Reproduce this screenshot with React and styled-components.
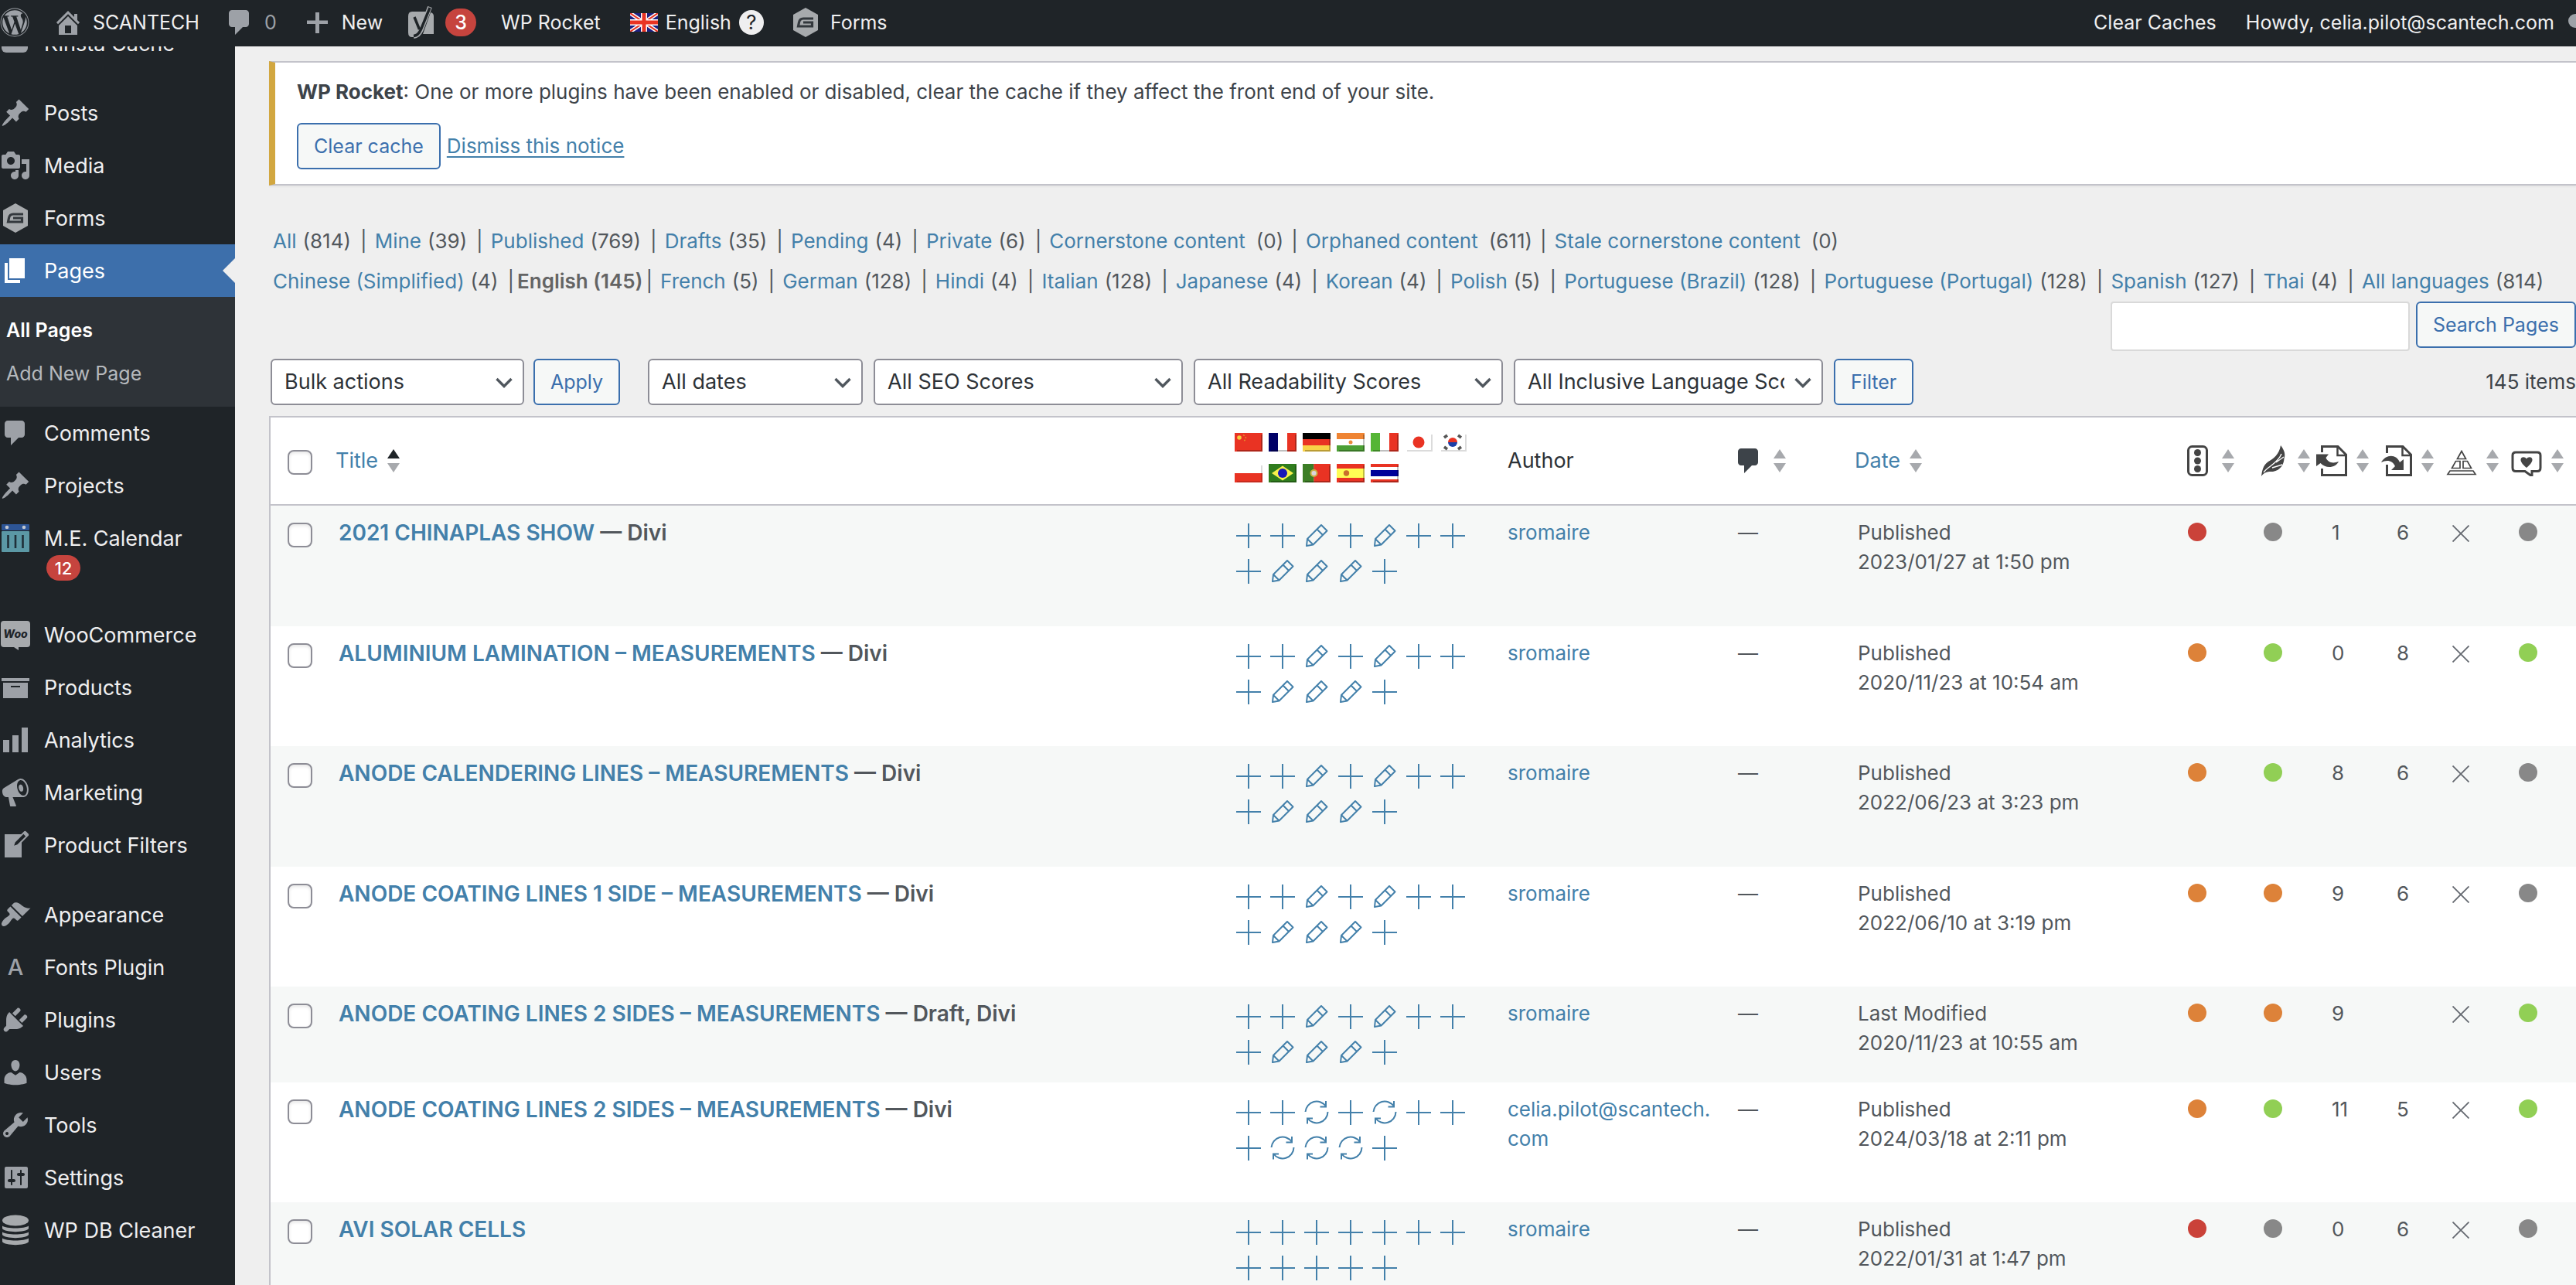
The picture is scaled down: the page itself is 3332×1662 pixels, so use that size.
import React from "react";
import styled, { createGlobalStyle, css } from "styled-components";
import { FaWordpress } from "react-icons/fa";

const c = {
  bar: "#1f2428",
  sub: "#2e3338",
  light: "#efeff0",
  icon: "#9da1a7",
  dim: "#b5b9bd",
  active: "#3d6fab",
  red: "#c6443e",
  bg: "#efefef",
  line: "#c3c3ca",
  field: "#8d8d96",
  link: "#4380aa",
  btn: "#3b6fad",
  text: "#3d4349",
  dark: "#2d3237",
  muted: "#52575c",
  stripe: "#f6f8f7",
  yellow: "#d2a740",
};
const dots = { red: "#ca4239", gray: "#888888", orange: "#dd8239", green: "#91cf55" };

const GlobalStyle = createGlobalStyle`
  *, *::before, *::after { box-sizing: border-box; }
  body {
    margin: 0;
    background: ${c.bg};
    color: ${c.text};
    font-family: Inter, "Liberation Sans", sans-serif;
    font-size: 26px;
    line-height: 38px;
  }
  button, input, select { font: inherit; }
  a { color: ${c.link}; text-decoration: none; }
  svg { display: block; flex: none; }
`;

const Page = styled.div`
  height: 100vh;
  overflow: hidden;
  display: flex;
  flex-direction: column;
`;

/* ---------- Admin bar ---------- */
const Bar = styled.header`
  flex: none;
  height: 60px;
  padding-bottom: 3px;
  background: ${c.bar};
  color: ${c.light};
  display: flex;
  justify-content: space-between;
  position: relative;
  z-index: 2;
  white-space: nowrap;
  font-size: 25px;
`;
const BarGroup = styled.nav`
  display: flex;
  align-items: center;
`;
const BarLink = styled.a`
  display: flex;
  align-items: center;
  gap: ${(p) => p.$gap || 12}px;
  padding: 0 ${(p) => p.$right ?? 14}px 0 ${(p) => p.$left ?? 16}px;
  color: ${(p) => (p.$dim ? c.icon : c.light)};
`;
const BarIcon = styled.span`
  color: ${c.icon};
`;
const Badge = styled.span`
  display: inline-flex;
  align-items: center;
  justify-content: center;
  min-width: ${(p) => p.$w}px;
  height: ${(p) => p.$h}px;
  border-radius: 18px;
  background: ${c.red};
  color: #fff;
  font-size: ${(p) => p.$size}px;
  font-weight: 500;
`;
const Help = styled.span`
  display: flex;
  align-items: center;
  justify-content: center;
  width: 32px;
  height: 32px;
  border-radius: 50%;
  background: ${c.light};
  color: ${c.bar};
  font-size: 26px;
`;
const Avatar = styled.span`
  width: 36px;
  height: 18px;
  margin: 0 -26px 12px 0;
  align-self: flex-end;
  border-radius: 18px;
  background: ${c.icon};
`;

/* ---------- Sidebar ---------- */
const Body = styled.div`
  flex: 1;
  min-height: 0;
  display: flex;
`;
const Sidebar = styled.nav`
  flex: none;
  width: 304px;
  background: ${c.bar};
`;
const Menu = styled.ul`
  list-style: none;
  margin: -38px 0 0;
  padding: 0;
`;
const MenuItem = styled.li`
  margin-bottom: ${(p) => (p.$gapAfter ? 22 : 0)}px;
`;
const MenuLink = styled.a`
  display: flex;
  align-items: flex-start;
  gap: 17px;
  padding: 15px 0 14px;
  color: ${c.light};
  font-size: 27px;
  position: relative;
  ${(p) =>
    p.$active &&
    css`
      background: ${c.active};
      color: #fff;
      &::after {
        content: "";
        position: absolute;
        right: 0;
        top: 18px;
        border: 16px solid transparent;
        border-left: 0;
        border-right-color: ${c.bg};
      }
    `}
`;
const MenuIcon = styled.span`
  flex: none;
  width: 40px;
  height: 38px;
  display: flex;
  align-items: center;
  justify-content: center;
  color: ${(p) => (p.$active ? "#fff" : c.icon)};
`;
const MenuText = styled.span`
  display: flex;
  flex-direction: column;
  align-items: flex-start;
  padding-top: 1px;
  ${Badge} {
    margin: 2px 0 0 3px;
  }
`;
const SubMenu = styled.ul`
  list-style: none;
  margin: 0;
  padding: 15px 0;
  background: ${c.sub};
`;
const SubLink = styled.a`
  display: block;
  padding: 9px 8px;
  color: ${(p) => (p.$current ? "#fff" : c.dim)};
  font-size: 25px;
  font-weight: ${(p) => (p.$current ? 600 : 400)};
`;

/* ---------- Main ---------- */
const Main = styled.main`
  flex: 1;
  min-width: 0;
  padding: 19px 0 0 44px;
`;
const Notice = styled.section`
  background: #fff;
  border: 2px solid ${c.line};
  border-left: 8px solid ${c.yellow};
  border-right: 0;
  box-shadow: 0 2px 2px rgba(0, 0, 0, 0.04);
  padding: 19px 28px;
  margin-bottom: 46px;
`;
const NoticeText = styled.p`
  margin: 0 0 21px;
`;
const NoticeActions = styled.div`
  display: flex;
  align-items: center;
  gap: 8px;
`;
const Underlined = styled.a`
  text-decoration: underline;
  text-decoration-thickness: 2px;
  text-underline-offset: 4px;
`;
const Button = styled.button`
  height: 60px;
  padding: 0 20px;
  border: 2px solid ${c.btn};
  border-radius: 6px;
  background: ${c.stripe};
  color: ${c.btn};
  font-size: 25px;
  white-space: nowrap;
`;
const Views = styled.ul`
  list-style: none;
  margin: 0;
  padding: 0 0 0 5px;
  display: flex;
  line-height: 52px;
  white-space: nowrap;
`;
const View = styled.li`
  display: flex;
  gap: ${(p) => (p.$wide ? 14 : 8)}px;
  color: ${c.muted};
  strong { color: #646464; font-weight: 600; }
  &:not(:last-child)::after {
    content: "|";
    margin-left: ${(p) => (p.$tight ? -4 : 4)}px;
    margin-right: ${(p) => (p.$tightAfter ? 4 : 10)}px;
  }
`;
const SearchRow = styled.form`
  display: flex;
  justify-content: flex-end;
  gap: 8px;
  margin-bottom: 10px;
`;
const SearchInput = styled.input`
  width: 387px;
  height: 64px;
  border: 2px solid #d9d9d9;
  border-radius: 4px;
  background: #fff;
  padding: 0 16px;
`;
const Nav = styled.div`
  display: flex;
  align-items: center;
  padding-left: 2px;
  margin-bottom: 14px;
`;
const NavGroup = styled.div`
  display: flex;
  gap: ${(p) => p.$gap || 12}px;
  margin-right: ${(p) => p.$after || 0}px;
`;
const Count = styled.span`
  margin-left: auto;
`;
const SelectBox = styled.div`
  position: relative;
  width: ${(p) => p.$w}px;
  svg {
    position: absolute;
    right: 15px;
    top: 24px;
    pointer-events: none;
  }
`;
const Select = styled.select`
  appearance: none;
  width: 100%;
  height: 60px;
  padding: 0 48px 0 16px;
  border: 2px solid ${c.field};
  border-radius: 6px;
  background: #fff;
  color: ${c.dark};
  font-size: 27px;
`;

/* ---------- Table ---------- */
const Table = styled.table`
  width: 100%;
  table-layout: fixed;
  border-collapse: separate;
  border-spacing: 0;
  border: 2px solid ${c.line};
  border-right: 0;
  background: #fff;
`;
const Col = styled.col`
  width: ${(p) => (p.$w ? `${p.$w}px` : "auto")};
`;
const Th = styled.th`
  height: 114px;
  padding: 0 0 0 ${(p) => p.$left || 0}px;
  border-bottom: 2px solid ${c.line};
  text-align: left;
  vertical-align: middle;
  font-weight: 400;
  font-size: 27px;
  color: ${c.dark};
`;
const Row = styled.tr`
  height: 156px;
  vertical-align: top;
  &:nth-child(even) { height: 155px; }
  &:nth-child(odd) { background: ${c.stripe}; }
  && { ${(p) => p.$short && "height: 124px;"} }
`;
const Td = styled.td`
  padding: 16px 0 0 ${(p) => p.$left || 0}px;
  color: ${c.muted};
`;
const TitleTd = styled(Td)`
  font-size: 28px;
  font-weight: 600;
`;
const AuthorTd = styled(Td)`
  padding-right: 14px;
  overflow-wrap: anywhere;
`;
const Check = styled.input`
  appearance: none;
  display: block;
  width: 32px;
  height: 32px;
  margin: ${(p) => (p.$row ? 6 : 4)}px 0 0;
  border: 2px solid ${c.field};
  border-radius: 8px;
  background: #fff;
  box-shadow: inset 0 2px 4px rgba(0, 0, 0, 0.1);
`;
const SortLink = styled.a`
  display: flex;
  align-items: center;
  gap: 12px;
  color: ${(p) => (p.$plain ? c.text : c.link)};
`;
const FlagGrid = styled.div`
  display: grid;
  grid-template-columns: repeat(7, 36px);
  gap: 16px 8px;
  padding-bottom: 8px;
`;
const TransGrid = styled.div`
  display: grid;
  grid-template-columns: repeat(7, 36px);
  column-gap: 8px;
  a { color: ${c.link}; }
`;
const Dot = styled.span`
  display: block;
  width: 24px;
  height: 24px;
  margin-top: 6px;
  border-radius: 50%;
  background: ${(p) => dots[p.$tone]};
`;
const CrossBox = styled.span`
  display: block;
  padding-top: 9px;
`;

/* ---------- Drawings ---------- */
const dash = {
  home: "M16 8.5l1.53 1.53-1.06 1.06L10 4.6l-6.47 6.49-1.06-1.06L10 2.5l4 4v-2h2v4zm-6-2.46l6 5.99V18H4v-5.97zM12 17v-5H8v5h4z",
  comment: "M5 2h9c1.1 0 2 .9 2 2v7c0 1.1-.9 2-2 2h-2l-5 5v-5H5c-1.1 0-2-.9-2-2V4c0-1.1.9-2 2-2z",
  plus: "M17 8.8v2.2h-5.5v6H9v-6H3.5V8.8H9V3.5h2.5v5.3z",
  pin: "M10.44 3.02l1.82-1.82 6.36 6.35-1.83 1.82c-1.05-.68-2.48-.57-3.41.36l-.75.75c-.92.93-1.04 2.35-.35 3.41l-1.83 1.82-2.41-2.41-2.8 2.79c-.42.42-3.38 2.71-3.8 2.29s1.86-3.39 2.28-3.81l2.79-2.79L4.1 9.36l1.83-1.82c1.05.69 2.48.57 3.4-.36l.75-.75c.93-.92 1.05-2.35.36-3.41z",
  media: "M13 11V4c0-.55-.45-1-1-1h-1.67L9 1H5L3.67 3H2c-.55 0-1 .45-1 1v7c0 .55.45 1 1 1h10c.55 0 1-.45 1-1zM7 4.5c1.38 0 2.5 1.12 2.5 2.5S8.38 9.5 7 9.5 4.5 8.38 4.5 7 5.62 4.5 7 4.5zM14 6h5v10.5c0 1.38-1.12 2.5-2.5 2.5S14 17.88 14 16.5s1.12-2.5 2.5-2.5c.17 0 .34.02.5.05V9h-3V6zm-4 8.05V13h2v3.5c0 1.38-1.12 2.5-2.5 2.5S7 17.88 7 16.5 8.12 14 9.5 14c.17 0 .34.02.5.05z",
  page: "M6 15V2h10v13H6zm-1 1h8v2H3V5h2v11z",
  archive: "M19 4v2H1V4h18zM2 7h16v10H2V7zm11 3V9H7v1h6z",
  chart: "M18 18V2h-4v16h4zm-6 0V7H8v11h4zm-6 0v-8H2v8h4z",
  megaphone: "M18.15 5.94c.46 1.62.38 3.22-.02 4.48-.42 1.28-1.26 2.18-2.3 2.48-.16.06-.26.06-.4.06-.06.02-.12.02-.18.02-.06.02-.14.02-.22.02h-6.8l2.22 5.5c.02.14-.06.26-.14.34-.08.1-.24.16-.34.16H6.95c-.1 0-.26-.06-.34-.16-.08-.08-.16-.2-.14-.34l-1-5.5H4.25l-.02-.02c-.5.06-1.08-.18-1.54-.62s-.88-1.08-1.06-1.88c-.24-.8-.2-1.56-.02-2.2.18-.62.58-1.08 1.06-1.3l.02-.02 9-5.4c.1-.06.18-.1.24-.16.06-.04.14-.08.24-.12.16-.08.28-.12.5-.18 1.04-.3 2.24.1 3.22.98s1.84 2.24 2.26 3.86zm-2.58 5.98h-.02c.4-.1.74-.34 1.04-.7.58-.7.86-1.76.86-3.04 0-.64-.1-1.3-.28-1.98-.34-1.36-1.02-2.5-1.78-3.24s-1.68-1.1-2.46-.88c-.82.22-1.4.96-1.7 2-.32 1.04-.28 2.36.06 3.72.38 1.36 1 2.5 1.8 3.24.78.74 1.62 1.1 2.48.88zm-2.54-7.08c.22-.04.42-.02.62.04.38.16.76.48 1.02 1s.42 1.2.42 1.78c0 .3-.04.56-.12.8-.18.48-.44.84-.86.94-.34.1-.8-.06-1.14-.4s-.64-.86-.78-1.5c-.18-.62-.12-1.24.02-1.72s.48-.84.82-.94z",
  write: "M16.89 1.2l1.41 1.41c.39.39.39 1.02 0 1.41L14 8.33V18H3V3h10.67l1.8-1.8c.4-.39 1.03-.4 1.42 0zm-5.66 8.48l5.37-5.36-1.42-1.42-5.36 5.37-.71 2.12z",
  brush: "M14.48 11.06L7.41 3.99l1.5-1.5c.5-.56 2.3-.47 3.51.32 1.21.8 1.43 1.28 2.91 2.1 1.18.64 2.45 1.26 4.45.85zm-.71.71L6.7 4.7 4.93 6.47c-.39.39-.39 1.02 0 1.41l1.06 1.06c.39.39.39 1.03 0 1.42-.6.6-1.43 1.11-2.21 1.69-.35.26-.7.53-1.01.84C1.43 14.23.4 16.08 1.4 17.07c.99 1 2.84-.03 4.18-1.36.31-.31.58-.66.85-1.02.57-.78 1.08-1.61 1.69-2.21.39-.39 1.02-.39 1.41 0l1.06 1.06c.39.39 1.02.39 1.41 0z",
  plug: "M13.11 4.36L9.87 7.6 8 5.73l3.24-3.24c.35-.34 1.05-.2 1.56.32.52.51.66 1.21.31 1.55zm-8 1.77l.91-1.12 9.01 9.01-1.19.84c-.71.71-2.63 1.16-3.82 1.16H6.14L4.9 17.26c-.59.59-1.54.59-2.12 0-.59-.58-.59-1.53 0-2.12l1.24-1.24v-3.88c0-1.13.4-3.19 1.09-3.89zm7.26 3.97l3.24-3.24c.34-.35 1.04-.21 1.55.31.52.51.66 1.21.31 1.55l-3.24 3.25z",
  user: "M10 9.25c-2.27 0-2.73-3.44-2.73-3.44C7 4.02 7.82 2 9.97 2c2.16 0 2.98 2.02 2.71 3.81 0 0-.41 3.44-2.68 3.44zm0 2.57L12.72 10c2.39 0 4.52 2.33 4.52 4.53v2.49s-3.65 1.13-7.24 1.13c-3.65 0-7.24-1.13-7.24-1.13v-2.49c0-2.25 1.94-4.48 4.47-4.48z",
  wrench: "M16.68 9.77c-1.34 1.34-3.3 1.67-4.95.99l-5.41 6.52c-.99.99-2.59.99-3.58 0s-.99-2.59 0-3.57l6.52-5.42c-.68-1.65-.35-3.61.99-4.95 1.28-1.28 3.12-1.62 4.72-1.06l-2.89 2.89 2.82 2.82 2.86-2.87c.53 1.58.18 3.39-1.08 4.65zM3.81 16.21c.4.39 1.04.39 1.43 0 .4-.4.4-1.04 0-1.43-.39-.4-1.03-.4-1.43 0-.39.39-.39 1.03 0 1.43z",
  sliders: "M18 16V4c0-.55-.45-1-1-1H4c-.55 0-1 .45-1 1v12c0 .55.45 1 1 1h13c.55 0 1-.45 1-1zM8 11h1c.55 0 1 .45 1 1s-.45 1-1 1H8v1.5c0 .28-.22.5-.5.5s-.5-.22-.5-.5V13H6c-.55 0-1-.45-1-1s.45-1 1-1h1V5.5c0-.28.22-.5.5-.5s.5.22.5.5V11zm5-2h-1c-.55 0-1-.45-1-1s.45-1 1-1h1V5.5c0-.28.22-.5.5-.5s.5.22.5.5V7h1c.55 0 1 .45 1 1s-.45 1-1 1h-1v5.5c0 .28-.22.5-.5.5s-.5-.22-.5-.5V9z",
};
const Dash = ({ name }) => (
  <svg width="40" height="40" viewBox="0 0 20 20" fill="currentColor" fillRule="evenodd" aria-hidden="true">
    <path d={dash[name]} />
  </svg>
);
const Gravity = () => (
  <svg width="40" height="40" viewBox="0 0 40 40" aria-hidden="true">
    <path d="M20 1L36 10V30L20 39L4 30V10Z" fill="#a7aaad" />
    <path d="M30 15H17Q12.5 15 11.5 20L10.5 25H28.5V20H17" fill="none" stroke="#33383d" strokeWidth="3.2" />
  </svg>
);
const Woo = () => (
  <svg width="40" height="40" viewBox="0 0 40 40" aria-hidden="true">
    <path d="M5 2H35Q39 2 39 6V32Q39 36 35 36H24V40L18 36H5Q1 36 1 32V6Q1 2 5 2Z" fill="#a7aaad" />
    <text x="20" y="24" textAnchor="middle" fontFamily="Inter, sans-serif" fontWeight="800" fontStyle="italic" fontSize="14" fill="#1f2428">Woo</text>
  </svg>
);
const Calendar = () => (
  <svg width="40" height="40" viewBox="0 0 40 40" aria-hidden="true">
    <rect x="2" y="2" width="36" height="8" rx="1" fill="#2d5596" />
    <circle cx="9" cy="6" r="2.3" fill="#c3c8d0" />
    <circle cx="31" cy="6" r="2.3" fill="#c3c8d0" />
    <rect x="2" y="11" width="36" height="27" rx="1" fill="#5b98a5" />
    <path d="M10.5 16V33M20 16V33M29.5 16V33" stroke="#1f2f38" strokeWidth="2.6" />
  </svg>
);
const Database = () => (
  <svg width="40" height="40" viewBox="0 0 40 40" fill="#a7aaad" aria-hidden="true">
    <ellipse cx="20" cy="7.5" rx="17" ry="7" />
    <path d="M3 14.5C8 18.5 32 18.5 37 14.5V18C34 23.5 6 23.5 3 18ZM3 22.500C8 26.5 32 26.5 37 22.5V26C34 31.5 6 31.5 3 26ZM3 30.5C8 34.5 32 34.5 37 30.5V35C34 40.5 6 40.5 3 35Z" />
  </svg>
);
const LetterA = styled.span`
  font-size: 29px;
  font-weight: 500;
`;
const Drive = () => (
  <svg width="40" height="40" viewBox="0 0 40 40" fill="currentColor" aria-hidden="true">
    <rect x="2" y="4" width="34" height="28" rx="6" />
  </svg>
);
const Yoast = () => (
  <svg width="36" height="42" viewBox="0 0 36 42" aria-hidden="true">
    <path d="M6 7H27L13 40H6Q1 40 1 34V13Q1 7 6 7ZM30 8Q34 9 34 13V36H20Z" fill="#a7aaad" />
    <path d="M8 15L15 31M29 1L18 30Q15 38 8 39" fill="none" stroke="#a7aaad" strokeWidth="6" />
    <path d="M9 14L15.5 30M29 2L17.5 30Q14 38 8 38.5" fill="none" stroke="#1f2428" strokeWidth="3.4" />
  </svg>
);

const Stripes = ({ v, colors, sizes }) => {
  const total = v ? 36 : 24;
  const weights = sizes || colors.map(() => 1);
  const sum = weights.reduce((a, b) => a + b, 0);
  let at = 0;
  return colors.map((fill, i) => {
    const len = (weights[i] / sum) * total;
    const start = at;
    at += len;
    return v ? (
      <rect key={i} x={start} width={len + 0.2} height="24" fill={fill} />
    ) : (
      <rect key={i} y={start} height={len + 0.2} width="36" fill={fill} />
    );
  });
};
const R = "#e93323";
const flagArt = {
  gb: (
    <>
      <rect width="36" height="24" fill="#1c1f80" />
      <path d="M0 0L36 24M36 0L0 24" stroke="#fff" strokeWidth="5" />
      <path d="M0 0L36 24M36 0L0 24" stroke={R} strokeWidth="2" />
      <path d="M18 0V24M0 12H36" stroke="#fff" strokeWidth="8" />
      <path d="M18 0V24M0 12H36" stroke={R} strokeWidth="5" />
    </>
  ),
  cn: (
    <>
      <rect width="36" height="24" fill={R} />
      <circle cx="6" cy="6" r="2.8" fill="#f5cf3e" />
      <path d="M11 2.5Q18 6.5 11 11" fill="none" stroke="#e58a2c" strokeWidth="1.5" strokeDasharray="2 2" />
    </>
  ),
  fr: <Stripes v colors={["#000067", "#fff", R]} />,
  de: <Stripes colors={["#000", R, "#f8d147"]} />,
  in: (
    <>
      <Stripes colors={["#ef8433", "#fff", "#4c9f35"]} />
      <circle cx="18" cy="12" r="2.5" fill="#e88a3a" />
    </>
  ),
  it: <Stripes v colors={["#55b535", "#fff", R]} />,
  jp: (
    <>
      <rect width="36" height="24" fill="#fff" />
      <circle cx="18" cy="12" r="7.5" fill={R} />
    </>
  ),
  kr: (
    <>
      <rect width="36" height="24" fill="#fff" />
      <path d="M12 12A6 6 0 0 1 24 12Z" fill={R} />
      <path d="M12 12A6 6 0 0 0 24 12Z" fill="#1c3fa8" />
      <path d="M7 6L11 3M25 3L29 6M7 18L11 21M25 21L29 18" stroke="#555" strokeWidth="3.5" />
    </>
  ),
  pl: <Stripes colors={["#fff", R]} />,
  br: (
    <>
      <rect width="36" height="24" fill="#2f7c1d" />
      <path d="M18 2.5L32 12L18 21.5L4 12Z" fill="#f7f04b" />
      <circle cx="18" cy="12" r="6" fill="#1717b8" />
    </>
  ),
  pt: (
    <>
      <Stripes v colors={["#3c7d25", R]} sizes={[2, 3]} />
      <circle cx="14.5" cy="12" r="5" fill="#c9b046" />
      <circle cx="14.5" cy="12" r="3" fill="#dcd5dd" />
    </>
  ),
  es: (
    <>
      <Stripes colors={[R, "#fffd54", R]} sizes={[1, 2, 1]} />
      <circle cx="12.5" cy="12" r="3.7" fill="#c9702c" />
    </>
  ),
  th: <Stripes colors={[R, "#fff", "#00009a", "#fff", R]} sizes={[1, 1, 2, 1, 1]} />,
};
const paleFlags = ["jp", "kr", "pl"];
const Flag = ({ code }) => (
  <svg width="36" height="24" viewBox="0 0 36 24" role="img" aria-label={code}>
    {flagArt[code]}
    {code !== "gb" && (
      <path d="M35 2V23H3" fill="none" stroke={`rgba(0,0,0,${paleFlags.includes(code) ? 0.14 : 0.25})`} strokeWidth="2" />
    )}
  </svg>
);

const Chevron = () => (
  <svg width="22" height="14" viewBox="0 0 22 14" fill="none" stroke="#50575e" strokeWidth="3.4" aria-hidden="true">
    <path d="M1.5 2L11 11.5L20.5 2" />
  </svg>
);
const Sorter = ({ up }) => (
  <svg width="16" height="30" viewBox="0 0 16 30" aria-hidden="true">
    <path d="M8 0L16 12H0Z" fill={up ? "#1f2428" : "#a7a9ad"} />
    <path d="M0 18H16L8 30Z" fill="#a7a9ad" />
  </svg>
);
const transArt = {
  "+": <path d="M18 7V39M2 23H34" />,
  e: <path d="M5 36L6 27L24 9L31.5 16.5L13.5 34.5ZM18.5 14.5L26 22M6 27L13.5 34.5" strokeLinejoin="round" />,
  r: <path d="M3.5 22A14.5 14.5 0 0 1 30 15M30 8V15.5H22.5M32.5 22A14.5 14.5 0 0 1 6 30M13 30.5H6V37.5" />,
};
const transLabels = { "+": "Add", e: "Edit", r: "Sync" };
const Trans = ({ kind }) => (
  <a href="#translate" aria-label={transLabels[kind]}>
    <svg width="36" height="46" viewBox="0 0 36 46" fill="none" stroke="currentColor" strokeWidth="2">
      {transArt[kind]}
    </svg>
  </a>
);
const Cross = () => (
  <svg width="22" height="22" viewBox="0 0 22 22" stroke="#646970" strokeWidth="1.8" aria-hidden="true">
    <path d="M0.5 0.5L21.5 21.5M21.5 0.5L0.5 21.5" />
  </svg>
);

const ink = "#444444";
const colArt = {
  traffic: (
    <>
      <rect x="8.5" y="1.5" width="24" height="37" rx="5" fill="none" stroke={ink} strokeWidth="3" />
      <circle cx="20.5" cy="9.5" r="4.5" fill={ink} />
      <circle cx="20.5" cy="20" r="4.5" fill={ink} />
      <circle cx="20.5" cy="30.5" r="4.5" fill={ink} />
    </>
  ),
  feather: (
    <>
      <path d="M5 40C6 33 7 26 14 21C21 17 28 12 30 0C36 8 36 13 34.5 17C34 25 30 32 20 34C14 34 9 34 5 40Z" fill={ink} />
      <path d="M8 35C13 27 26 24 31 11M19 29L32 25M24 22L34 15" fill="none" stroke="#fff" strokeWidth="1.4" />
    </>
  ),
  incoming: (
    <>
      <path d="M7.5 9V1.5H28L38.5 12V38.5H7.5V30" fill="none" stroke={ink} strokeWidth="3" />
      <path d="M27.5 2V13H39" fill="none" stroke={ink} strokeWidth="2.5" />
      <path d="M0 11.5H16L12.5 16C15 22 21 24 29 21C25 29 13 31 5.5 23L0 27Z" fill={ink} />
    </>
  ),
  outgoing: (
    <>
      <path d="M7.5 10V1.5H28L38.5 12V38.5H7.5V25" fill="none" stroke={ink} strokeWidth="3" />
      <path d="M27.5 2V13H39" fill="none" stroke={ink} strokeWidth="2.5" />
      <path d="M0 22C6 11 20 11 24 22L29 18V32H13L18 27C15 20 8 18 0 22Z" fill={ink} />
    </>
  ),
  pyramid: (
    <path
      d="M20 7.5L25.500 17.5H14.5ZM12.5 20.5H18V29.500H7.5ZM22 20.5H27.5L32.5 29.5H22ZM5 33H35L38 37.5H2Z"
      fill="none"
      stroke={ink}
      strokeWidth="1.7"
    />
  ),
  heart: (
    <>
      <path d="M6 9H34Q38 9 38 13V29Q38 33.5 34 33.5H27V40L18 33.5H6Q2 33.5 2 29V13Q2 9 6 9Z" fill="none" stroke={ink} strokeWidth="3" />
      <path d="M20 29C14 24 12.5 21 12.5 18.5C12.5 14.5 18 14 20 17.5C22 14 27.5 14.5 27.5 18.5C27.5 21 26 24 20 29Z" fill={ink} />
    </>
  ),
};
const ColIcon = ({ name }) => (
  <svg width="40" height="40" viewBox="0 0 40 40" aria-hidden="true">
    {colArt[name]}
  </svg>
);

/* ---------- Data ---------- */
const menu = [
  { label: "Kinsta Cache", icon: <Drive />, gap: true },
  { label: "Posts", icon: <Dash name="pin" /> },
  { label: "Media", icon: <Dash name="media" /> },
  { label: "Forms", icon: <Gravity /> },
  { label: "Pages", icon: <Dash name="page" />, active: true, children: ["All Pages", "Add New Page"] },
  { label: "Comments", icon: <Dash name="comment" /> },
  { label: "Projects", icon: <Dash name="pin" /> },
  { label: "M.E. Calendar", icon: <Calendar />, badge: 12, gap: true },
  { label: "WooCommerce", icon: <Woo /> },
  { label: "Products", icon: <Dash name="archive" /> },
  { label: "Analytics", icon: <Dash name="chart" /> },
  { label: "Marketing", icon: <Dash name="megaphone" /> },
  { label: "Product Filters", icon: <Dash name="write" />, gap: true },
  { label: "Appearance", icon: <Dash name="brush" /> },
  { label: "Fonts Plugin", icon: <LetterA aria-hidden="true">A</LetterA> },
  { label: "Plugins", icon: <Dash name="plug" /> },
  { label: "Users", icon: <Dash name="user" /> },
  { label: "Tools", icon: <Dash name="wrench" /> },
  { label: "Settings", icon: <Dash name="sliders" /> },
  { label: "WP DB Cleaner", icon: <Database /> },
];
const statusViews = [
  ["All", 814], ["Mine", 39], ["Published", 769], ["Drafts", 35], ["Pending", 4], ["Private", 6],
  ["Cornerstone content", 0, { wide: true }], ["Orphaned content", 611, { wide: true }],
  ["Stale cornerstone content", 0, { wide: true }],
];
const languageViews = [
  ["Chinese (Simplified)", 4, { tightAfter: true }], ["English", 145, { current: true }], ["French", 5], ["German", 128],
  ["Hindi", 4], ["Italian", 128], ["Japanese", 4], ["Korean", 4], ["Polish", 5], ["Portuguese (Brazil)", 128],
  ["Portuguese (Portugal)", 128], ["Spanish", 127], ["Thai", 4], ["All languages", 814],
];
const flags = ["cn", "fr", "de", "in", "it", "jp", "kr", "pl", "br", "pt", "es", "th"];
const seoCols = [
  ["traffic", "SEO score", 98], ["feather", "Readability score", 76], ["incoming", "Outgoing links", 84],
  ["outgoing", "Received links", 84], ["pyramid", "Cornerstone", 84], ["heart", "Inclusive language", 84],
];
const mixed = "++e+e+++eee+";
const rows = [
  { title: "2021 CHINAPLAS SHOW", state: "Divi", tr: mixed, author: "sromaire", date: ["Published", "2023/01/27 at 1:50 pm"], s: ["red", "gray", 1, 6, "gray"] },
  { title: "ALUMINIUM LAMINATION – MEASUREMENTS", state: "Divi", tr: mixed, author: "sromaire", date: ["Published", "2020/11/23 at 10:54 am"], s: ["orange", "green", 0, 8, "green"] },
  { title: "ANODE CALENDERING LINES – MEASUREMENTS", state: "Divi", tr: mixed, author: "sromaire", date: ["Published", "2022/06/23 at 3:23 pm"], s: ["orange", "green", 8, 6, "gray"] },
  { title: "ANODE COATING LINES 1 SIDE – MEASUREMENTS", state: "Divi", tr: mixed, author: "sromaire", date: ["Published", "2022/06/10 at 3:19 pm"], s: ["orange", "orange", 9, 6, "gray"] },
  { title: "ANODE COATING LINES 2 SIDES – MEASUREMENTS", state: "Draft, Divi", tr: mixed, author: "sromaire", date: ["Last Modified", "2020/11/23 at 10:55 am"], s: ["orange", "orange", 9, "", "green"], short: true },
  { title: "ANODE COATING LINES 2 SIDES – MEASUREMENTS", state: "Divi", tr: "++r+r+++rrr+", author: "celia.pilot@scantech.com", date: ["Published", "2024/03/18 at 2:11 pm"], s: ["orange", "green", 11, 5, "green"] },
  { title: "AVI SOLAR CELLS", state: "", tr: "++++++++++++", author: "sromaire", date: ["Published", "2022/01/31 at 1:47 pm"], s: ["red", "gray", 0, 6, "gray"] },
];

const ViewList = ({ items, label }) => (
  <Views aria-label={label}>
    {items.map(([name, n, o = {}]) => (
      <View key={name} $wide={o.wide} $tight={o.wide || o.current} $tightAfter={o.tightAfter}>
        {o.current ? (
          <strong>{name} ({n})</strong>
        ) : (
          <>
            <a href="#view">{name}</a>
            <span>({n})</span>
          </>
        )}
      </View>
    ))}
  </Views>
);
const Dropdown = ({ label, width }) => (
  <SelectBox $w={width}>
    <Select aria-label={label}>
      <option>{label}</option>
    </Select>
    <Chevron />
  </SelectBox>
);

export default function App() {
  return (
    <Page>
      <GlobalStyle />
      <Bar>
        <BarGroup aria-label="Toolbar">
          <BarLink href="#wp" aria-label="WordPress" $left={0} $right={14}>
            <BarIcon><FaWordpress size={38} /></BarIcon>
          </BarLink>
          <BarLink href="#site"><BarIcon><Dash name="home" /></BarIcon>SCANTECH</BarLink>
          <BarLink href="#comments" $dim $left={18}><BarIcon><Dash name="comment" /></BarIcon>0</BarLink>
          <BarLink href="#new" $left={18}><BarIcon><Dash name="plus" /></BarIcon>New</BarLink>
          <BarLink href="#yoast" aria-label="Yoast SEO, 3 notifications" $left={18} $gap={13}>
            <Yoast />
            <Badge $w={40} $h={36} $size={25}>3</Badge>
          </BarLink>
          <BarLink href="#rocket" $left={18}>WP Rocket</BarLink>
          <BarLink href="#language" $left={24} $gap={10}>
            <Flag code="gb" />English<Help>?</Help>
          </BarLink>
          <BarLink href="#forms" $left={20}><Gravity />Forms</BarLink>
        </BarGroup>
        <BarGroup aria-label="Account">
          <BarLink href="#clear">Clear Caches</BarLink>
          <BarLink href="#account" $right={0} $left={24} $gap={18}>
            Howdy, celia.pilot@scantech.com
            <Avatar />
          </BarLink>
        </BarGroup>
      </Bar>
      <Body>
        <Sidebar aria-label="Main menu">
          <Menu>
            {menu.map((m) => (
              <MenuItem key={m.label} $gapAfter={m.gap}>
                <MenuLink href="#menu" $active={m.active}>
                  <MenuIcon $active={m.active}>{m.icon}</MenuIcon>
                  <MenuText>
                    {m.label}
                    {m.badge && <Badge $w={44} $h={33} $size={22}>{m.badge}</Badge>}
                  </MenuText>
                </MenuLink>
                {m.children && (
                  <SubMenu>
                    {m.children.map((name, i) => (
                      <li key={name}><SubLink href="#sub" $current={i === 0}>{name}</SubLink></li>
                    ))}
                  </SubMenu>
                )}
              </MenuItem>
            ))}
          </Menu>
        </Sidebar>
        <Main>
          <Notice>
            <NoticeText>
              <strong>WP Rocket</strong>: One or more plugins have been enabled or disabled, clear the cache if they affect the front end of your site.
            </NoticeText>
            <NoticeActions>
              <Button type="button">Clear cache</Button>
              <Underlined href="#dismiss">Dismiss this notice</Underlined>
            </NoticeActions>
          </Notice>
          <ViewList items={statusViews} label="Filter by status" />
          <ViewList items={languageViews} label="Filter by language" />
          <SearchRow onSubmit={(e) => e.preventDefault()}>
            <SearchInput type="search" aria-label="Search Pages" />
            <Button type="submit">Search Pages</Button>
          </SearchRow>
          <Nav>
            <NavGroup $after={36}>
              <Dropdown label="Bulk actions" width={328} />
              <Button type="button">Apply</Button>
            </NavGroup>
            <NavGroup $gap={14}>
              <Dropdown label="All dates" width={278} />
              <Dropdown label="All SEO Scores" width={400} />
              <Dropdown label="All Readability Scores" width={400} />
              <Dropdown label="All Inclusive Language Scores" width={400} />
              <Button type="button">Filter</Button>
            </NavGroup>
            <Count>145 items</Count>
          </Nav>
          <Table>
            <colgroup>
              <Col $w={72} />
              <Col />
              <Col $w={353} />
              <Col $w={298} />
              <Col $w={151} />
              <Col $w={439} />
              {seoCols.map(([icon, , w]) => <Col key={icon} $w={w} />)}
            </colgroup>
            <thead>
              <tr>
                <Th $left={22}><Check type="checkbox" aria-label="Select all" /></Th>
                <Th $left={12}><SortLink href="#title">Title<Sorter up /></SortLink></Th>
                <Th $left={16}><FlagGrid>{flags.map((f) => <Flag key={f} code={f} />)}</FlagGrid></Th>
                <Th $left={16}>Author</Th>
                <Th $left={10}>
                  <SortLink href="#comments" aria-label="Comments" $plain><Dash name="comment" /><Sorter /></SortLink>
                </Th>
                <Th $left={16}><SortLink href="#date">Date<Sorter /></SortLink></Th>
                {seoCols.map(([icon, label]) => (
                  <Th key={icon}><SortLink href="#sort" aria-label={label}><ColIcon name={icon} /><Sorter /></SortLink></Th>
                ))}
              </tr>
            </thead>
            <tbody>
              {rows.map((r, i) => (
                <Row key={i} $short={r.short}>
                  <Td $left={22}><Check type="checkbox" $row aria-label={`Select ${r.title}`} /></Td>
                  <TitleTd $left={16}><a href="#edit">{r.title}</a>{r.state && ` — ${r.state}`}</TitleTd>
                  <Td $left={16}><TransGrid>{[...r.tr].map((k, j) => <Trans key={j} kind={k} />)}</TransGrid></Td>
                  <AuthorTd $left={16}><a href="#author">{r.author}</a></AuthorTd>
                  <Td $left={16}>—</Td>
                  <Td $left={20}>{r.date[0]}<br />{r.date[1]}</Td>
                  <Td $left={8}><Dot $tone={r.s[0]} /></Td>
                  <Td $left={8}><Dot $tone={r.s[1]} /></Td>
                  <Td $left={20}>{r.s[2]}</Td>
                  <Td $left={20}>{r.s[3]}</Td>
                  <Td $left={8}><CrossBox><Cross /></CrossBox></Td>
                  <Td $left={10}><Dot $tone={r.s[4]} /></Td>
                </Row>
              ))}
            </tbody>
          </Table>
        </Main>
      </Body>
    </Page>
  );
}
